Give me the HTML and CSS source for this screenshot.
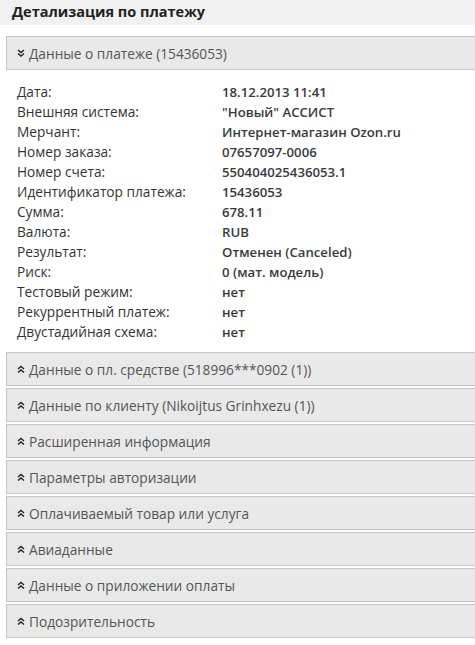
FILE: index.html
```html
<!DOCTYPE html>
<html lang="ru">
<head>
<meta charset="utf-8">
<link rel="stylesheet" href="styles.css">
</head>
<body>
<div class="title">Детализация по платежу</div>
<div class="acc">
  <div class="panel">
    <div class="ph"><svg class="chev" viewBox="0 0 8 8" width="8" height="8"><path d="M1 1 L4 3.5 L7 1 M1 4.5 L4 7 L7 4.5" fill="none" stroke="#222" stroke-width="1.4"/></svg>Данные о платеже (15436053)</div>
  </div>
  <div class="details">
    <div class="row"><span class="k">Дата:</span><span class="v">18.12.2013 11:41</span></div>
    <div class="row"><span class="k">Внешняя система:</span><span class="v">"Новый" АССИСТ</span></div>
    <div class="row"><span class="k">Мерчант:</span><span class="v">Интернет-магазин Ozon.ru</span></div>
    <div class="row"><span class="k">Номер заказа:</span><span class="v">07657097-0006</span></div>
    <div class="row"><span class="k">Номер счета:</span><span class="v">550404025436053.1</span></div>
    <div class="row"><span class="k">Идентификатор платежа:</span><span class="v">15436053</span></div>
    <div class="row"><span class="k">Сумма:</span><span class="v">678.11</span></div>
    <div class="row"><span class="k">Валюта:</span><span class="v">RUB</span></div>
    <div class="row"><span class="k">Результат:</span><span class="v">Отменен (Canceled)</span></div>
    <div class="row"><span class="k">Риск:</span><span class="v">0 (мат. модель)</span></div>
    <div class="row"><span class="k">Тестовый режим:</span><span class="v">нет</span></div>
    <div class="row"><span class="k">Рекуррентный платеж:</span><span class="v">нет</span></div>
    <div class="row"><span class="k">Двустадийная схема:</span><span class="v">нет</span></div>
  </div>
  <div class="panel"><div class="ph"><svg class="chev" viewBox="0 0 8 8" width="8" height="8"><path d="M1 4 L4 1.5 L7 4 M1 7.5 L4 5 L7 7.5" fill="none" stroke="#222" stroke-width="1.4"/></svg>Данные о пл. средстве (518996***0902 (1))</div></div>
  <div class="panel"><div class="ph"><svg class="chev" viewBox="0 0 8 8" width="8" height="8"><path d="M1 4 L4 1.5 L7 4 M1 7.5 L4 5 L7 7.5" fill="none" stroke="#222" stroke-width="1.4"/></svg>Данные по клиенту (Nikoijtus Grinhxezu (1))</div></div>
  <div class="panel"><div class="ph"><svg class="chev" viewBox="0 0 8 8" width="8" height="8"><path d="M1 4 L4 1.5 L7 4 M1 7.5 L4 5 L7 7.5" fill="none" stroke="#222" stroke-width="1.4"/></svg>Расширенная информация</div></div>
  <div class="panel"><div class="ph"><svg class="chev" viewBox="0 0 8 8" width="8" height="8"><path d="M1 4 L4 1.5 L7 4 M1 7.5 L4 5 L7 7.5" fill="none" stroke="#222" stroke-width="1.4"/></svg>Параметры авторизации</div></div>
  <div class="panel"><div class="ph"><svg class="chev" viewBox="0 0 8 8" width="8" height="8"><path d="M1 4 L4 1.5 L7 4 M1 7.5 L4 5 L7 7.5" fill="none" stroke="#222" stroke-width="1.4"/></svg>Оплачиваемый товар или услуга</div></div>
  <div class="panel"><div class="ph"><svg class="chev" viewBox="0 0 8 8" width="8" height="8"><path d="M1 4 L4 1.5 L7 4 M1 7.5 L4 5 L7 7.5" fill="none" stroke="#222" stroke-width="1.4"/></svg>Авиаданные</div></div>
  <div class="panel"><div class="ph"><svg class="chev" viewBox="0 0 8 8" width="8" height="8"><path d="M1 4 L4 1.5 L7 4 M1 7.5 L4 5 L7 7.5" fill="none" stroke="#222" stroke-width="1.4"/></svg>Данные о приложении оплаты</div></div>
  <div class="panel"><div class="ph"><svg class="chev" viewBox="0 0 8 8" width="8" height="8"><path d="M1 4 L4 1.5 L7 4 M1 7.5 L4 5 L7 7.5" fill="none" stroke="#222" stroke-width="1.4"/></svg>Подозрительность</div></div>
</div>
</body>
</html>
```

FILE: styles.css
```css
html, body {
  margin: 0;
  padding: 0;
  background: #fff;
  overflow: hidden;
}
body {
  font-family: "Open Sans", "Noto Sans", sans-serif;
  font-size: 13px;
  color: #333;
}
.title {
  height: 25px;
  line-height: 24px;
  background: #f1f1f1;
  padding-left: 12px;
  font-size: 14.5px;
  font-weight: 700;
  color: #222;
}
.acc {
  margin: 11px -20px 0 6px;
}
.panel {
  height: 32px;
  border: 1px solid #c5c5c5;
  background: #e9e9e9;
  margin-bottom: 2px;
}
.ph {
  display: flex;
  align-items: center;
  height: 32px;
  padding-left: 10px;
  font-size: 13.7px;
  color: #555;
}
.chev {
  margin-right: 4px;
  flex: none;
}
.details {
  padding: 10px 0 10px 11px;
}
.row {
  display: flex;
  height: 20px;
  line-height: 20px;
}
.k {
  width: 205px;
  flex: none;
  font-size: 13.7px;
  color: #333;
}
.v {
  font-size: 13.2px;
  font-weight: 600;
  color: #3a3a3a;
}
```
